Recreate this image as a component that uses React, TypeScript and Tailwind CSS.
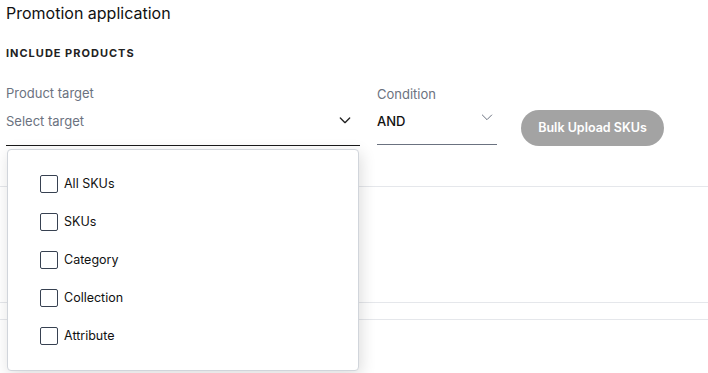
import React from "react";

const ChevronDown = ({ className, strokeWidth = 2 }: { className?: string; strokeWidth?: number }) => (
  <svg viewBox="0 0 24 24" fill="none" stroke="currentColor" strokeWidth={strokeWidth} strokeLinecap="round" strokeLinejoin="round" className={className}>
    <path d="M5 9l7 7 7-7" />
  </svg>
);

const options = ["All SKUs", "SKUs", "Category", "Collection", "Attribute"];

export default function App() {
  return (
    <div className="relative w-[708px] h-[373px] overflow-hidden bg-white text-[#1a1a1a]" style={{ fontFamily: "Inter, 'Noto Sans', sans-serif" }}>
      <div className="pl-[6px] pt-[1px]">
        <h1 className="text-[16px] leading-[24px] font-normal text-[#111]">Promotion application</h1>
        <div className="mt-[21px] text-[11px] leading-[14px] font-bold tracking-[1px] text-[#222]">INCLUDE PRODUCTS</div>
        <div className="mt-[25px] flex items-start">
          <div className="w-[354px]">
            <div className="text-[13px] leading-[16px] text-[#6b7280]">Product target</div>
            <div className="mt-[12px] h-[33px] flex items-start justify-between border-b border-[#1a1a1a]">
              <span className="text-[13px] leading-[16px] text-[#6b7280]">Select target</span>
              <ChevronDown className="w-[16px] h-[16px] mr-[7px] -mt-[1px] text-[#222]" strokeWidth={2} />
            </div>
          </div>
          <div className="ml-[17px] w-[120px]">
            <div className="text-[13px] leading-[16px] mt-[1px] text-[#6b7280]">Condition</div>
            <div className="mt-[11px] h-[32px] flex items-start justify-between border-b border-[#6b7280]">
              <span className="text-[13px] leading-[16px] font-medium text-[#111]">AND</span>
              <ChevronDown className="w-[16px] h-[16px] mr-[2px] -mt-[4px] text-[#6b7280]" strokeWidth={1.5} />
            </div>
          </div>
          <button className="ml-[24px] mt-[25px] w-[143px] h-[36px] rounded-full bg-[#a3a3a3] text-white text-[12.5px] font-semibold">
            Bulk Upload SKUs
          </button>
        </div>
      </div>
      <div className="mt-[40px] border-t border-[#e5e7eb]" />
      <div className="mt-[115px] border-t border-[#e5e7eb]" />
      <div className="mt-[16px] border-t border-[#e5e7eb]" />

      <div className="absolute left-[7px] top-[149px] w-[352px] h-[222px] bg-white border border-[#d1d5db] rounded-[4px] shadow-[2px_4px_16px_rgba(0,0,0,0.14)] pt-[15px] pl-[32px]">
        {options.map((o) => (
          <div key={o} className="flex items-center h-[38px]">
            <span className="w-[18px] h-[18px] border border-[#374151] rounded-[2px] bg-white" />
            <span className="ml-[6px] text-[12.5px] text-[#111]">{o}</span>
          </div>
        ))}
      </div>
    </div>
  );
}
